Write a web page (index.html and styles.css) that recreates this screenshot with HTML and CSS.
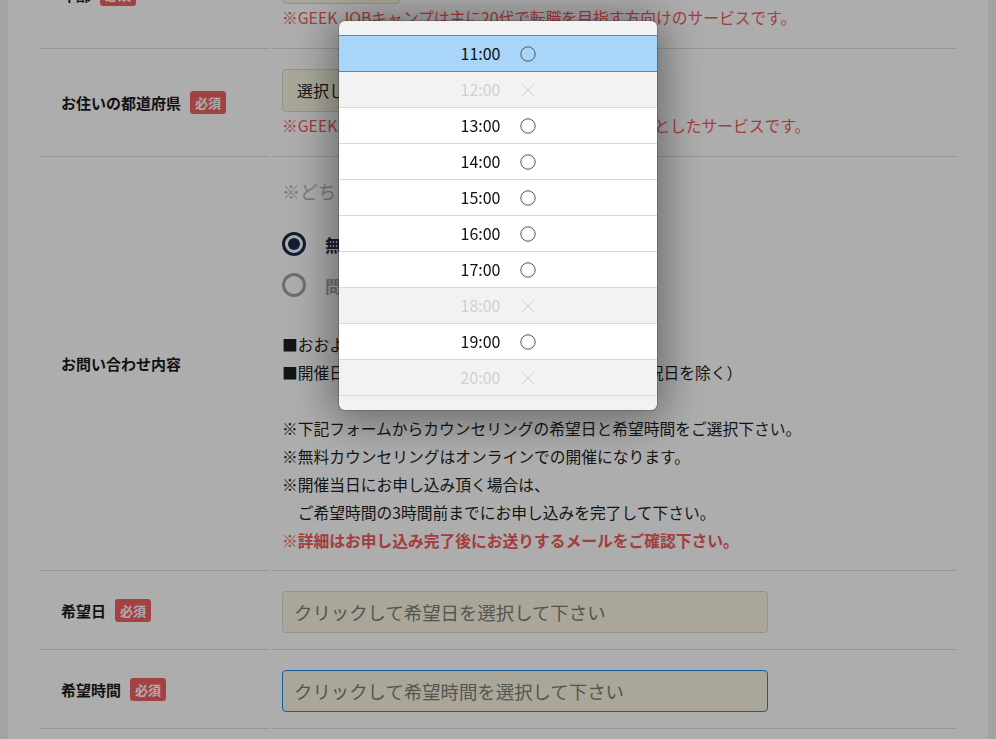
FILE: index.html
```html
<!DOCTYPE html>
<html lang="ja">
<head>
<meta charset="utf-8">
<title>無料カウンセリング申し込み</title>
<link rel="stylesheet" href="styles.css">
</head>
<body>
<div class="page">
  <div class="form">
    <div class="label">年齢<span class="req">必須</span></div>
    <div class="value">
      <input class="field age" type="text">
      <p class="note">※GEEK JOBキャンプは主に20代で転職を目指す方向けのサービスです。</p>
    </div>

    <div class="label">お住いの都道府県<span class="req">必須</span></div>
    <div class="value">
      <div class="field select">選択してください</div>
      <p class="note">※GEEK JOBキャンプは首都圏にお住まいの方を対象としたサービスです。</p>
    </div>

    <div class="label">お問い合わせ内容</div>
    <div class="value inquiry">
      <p class="hint">※どちらかをお選び下さい</p>
      <div class="radios">
        <div class="radio on"><span class="ring"></span>無料カウンセリングに申し込む</div>
        <div class="radio"><span class="ring"></span>問い合わせのみ</div>
      </div>
      <div class="info">
        <p>■おおよその所要時間：60分</p>
        <p>■開催日時：平日 11:00〜20:00（年末年始・土日・祝日を除く）</p>
        <p>&nbsp;</p>
        <p>※下記フォームからカウンセリングの希望日と希望時間をご選択下さい。</p>
        <p>※無料カウンセリングはオンラインでの開催になります。</p>
        <p>※開催当日にお申し込み頂く場合は、</p>
        <p>　ご希望時間の3時間前までにお申し込みを完了して下さい。</p>
        <p class="warn">※詳細はお申し込み完了後にお送りするメールをご確認下さい。</p>
      </div>
    </div>

    <div class="label">希望日<span class="req">必須</span></div>
    <div class="value short">
      <input class="field wide" type="text" placeholder="クリックして希望日を選択して下さい">
    </div>

    <div class="label">希望時間<span class="req">必須</span></div>
    <div class="value short">
      <input class="field wide focus" type="text" placeholder="クリックして希望時間を選択して下さい">
    </div>
  </div>
</div>

<div class="backdrop">
  <div class="picker">
    <div class="slot selected"><span class="time">11:00</span><svg class="mark" width="16" height="16" viewBox="0 0 16 16"><circle cx="8" cy="8" r="7.2" fill="none" stroke="#555" stroke-width="1"/></svg></div>
    <div class="slot off"><span class="time">12:00</span><svg class="mark" width="16" height="16" viewBox="0 0 16 16"><path d="M2.5 2.5L13.5 13.5M13.5 2.5L2.5 13.5" stroke="#cfcfcf" stroke-width="1"/></svg></div>
    <div class="slot"><span class="time">13:00</span><svg class="mark" width="16" height="16" viewBox="0 0 16 16"><circle cx="8" cy="8" r="7.2" fill="none" stroke="#555" stroke-width="1"/></svg></div>
    <div class="slot"><span class="time">14:00</span><svg class="mark" width="16" height="16" viewBox="0 0 16 16"><circle cx="8" cy="8" r="7.2" fill="none" stroke="#555" stroke-width="1"/></svg></div>
    <div class="slot"><span class="time">15:00</span><svg class="mark" width="16" height="16" viewBox="0 0 16 16"><circle cx="8" cy="8" r="7.2" fill="none" stroke="#555" stroke-width="1"/></svg></div>
    <div class="slot"><span class="time">16:00</span><svg class="mark" width="16" height="16" viewBox="0 0 16 16"><circle cx="8" cy="8" r="7.2" fill="none" stroke="#555" stroke-width="1"/></svg></div>
    <div class="slot"><span class="time">17:00</span><svg class="mark" width="16" height="16" viewBox="0 0 16 16"><circle cx="8" cy="8" r="7.2" fill="none" stroke="#555" stroke-width="1"/></svg></div>
    <div class="slot off"><span class="time">18:00</span><svg class="mark" width="16" height="16" viewBox="0 0 16 16"><path d="M2.5 2.5L13.5 13.5M13.5 2.5L2.5 13.5" stroke="#cfcfcf" stroke-width="1"/></svg></div>
    <div class="slot"><span class="time">19:00</span><svg class="mark" width="16" height="16" viewBox="0 0 16 16"><circle cx="8" cy="8" r="7.2" fill="none" stroke="#555" stroke-width="1"/></svg></div>
    <div class="slot off"><span class="time">20:00</span><svg class="mark" width="16" height="16" viewBox="0 0 16 16"><path d="M2.5 2.5L13.5 13.5M13.5 2.5L2.5 13.5" stroke="#cfcfcf" stroke-width="1"/></svg></div>
  </div>
</div>
</body>
</html>
```

FILE: styles.css
```css
* { box-sizing: border-box; }

html, body {
  margin: 0;
  height: 100%;
  overflow: hidden;
}

body {
  background: #f0f0f0;
  font-family: "Noto Sans CJK JP", "Noto Sans", sans-serif;
  color: #1e1e1e;
}

p { margin: 0; }

.page {
  margin: -59px 8px 0;
  padding: 0 32px;
  background: #fff;
  min-height: 900px;
}

.form {
  display: grid;
  grid-template-columns: 230px 684px;
  column-gap: 2px;
}

.label {
  display: flex;
  align-items: center;
  gap: 9px;
  padding-left: 21px;
  border-bottom: 1px solid #dedede;
  font-size: 15px;
  font-weight: bold;
  color: #1a1a1a;
}

.req {
  display: inline-flex;
  align-items: center;
  justify-content: center;
  width: 36px;
  height: 23px;
  border-radius: 3px;
  background: #f06262;
  color: #fff;
  font-size: 13px;
  font-weight: bold;
}

.value {
  padding: 20px 0 18px 10px;
  border-bottom: 1px solid #dedede;
}

.value.inquiry { padding-bottom: 15px; }
.value.short { padding-bottom: 16px; }

.field {
  display: block;
  height: 43px;
  border: 1px solid #d8d8d8;
  border-radius: 4px;
  background: #fbf7e2;
  font-family: inherit;
  font-size: 18px;
  color: #222;
  outline: none;
}

.field.age { width: 118px; }

.field.select {
  width: 210px;
  padding-left: 14px;
  font-size: 16px;
  line-height: 41px;
}

.field.wide {
  width: 486px;
  height: 42px;
  padding: 0 11px;
  font-size: 18.4px;
}

.field.wide::placeholder { color: #7c7c7c; }

.field.focus { border-color: #1f86f5; }

.note {
  margin-top: 2px;
  line-height: 24px;
  font-size: 15.75px;
  color: #f05a5a;
}

.hint {
  font-size: 18px;
  line-height: 28px;
  color: #b4b4b4;
}

.radios {
  margin-top: 24px;
  display: flex;
  flex-direction: column;
  gap: 11px;
}

.radio {
  display: flex;
  align-items: center;
  gap: 19px;
  height: 30px;
  font-size: 17px;
  font-weight: bold;
  color: #a8a8a8;
}

.ring {
  width: 24px;
  height: 24px;
  border-radius: 50%;
  border: 3px solid #a2a2a2;
  display: flex;
  align-items: center;
  justify-content: center;
}

.radio.on { color: #1d2a4c; }
.radio.on .ring { border-color: #1d2a4c; }
.radio.on .ring::after {
  content: "";
  width: 12px;
  height: 12px;
  border-radius: 50%;
  background: #1d2a4c;
}

.info {
  margin-top: 31px;
  font-size: 15.75px;
  line-height: 28px;
  color: #1e1e1e;
}

.info .warn {
  color: #f05a5a;
  font-weight: bold;
}

/* modal */
.backdrop {
  position: fixed;
  inset: 0;
  background: rgba(0, 0, 0, 0.32);
  display: flex;
  justify-content: center;
  align-items: flex-start;
  padding-top: 21px;
}

.picker {
  width: 318px;
  padding: 14px 0;
  background: #f2f2f2;
  border-radius: 6px;
  overflow: hidden;
  box-shadow: 0 0 0 1px rgba(0, 0, 0, 0.18), 0 4px 44px 6px rgba(0, 0, 0, 0.42);
}

.slot {
  height: 36px;
  display: flex;
  align-items: center;
  justify-content: center;
  gap: 19px;
  padding-bottom: 2px;
  background: #fff;
  border-bottom: 1px solid #dadada;
  font-size: 16px;
  color: #111;
}

.slot .time { width: 41px; text-align: center; }

.slot .mark { display: block; margin-top: 3px; }

.slot.selected {
  height: 37px;
  background: #a8d5f8;
  border-top: 1px solid #3b8de2;
  border-bottom-color: #3b8de2;
}

.slot.off {
  background: #f2f2f2;
  color: #d0d0d0;
}
```
